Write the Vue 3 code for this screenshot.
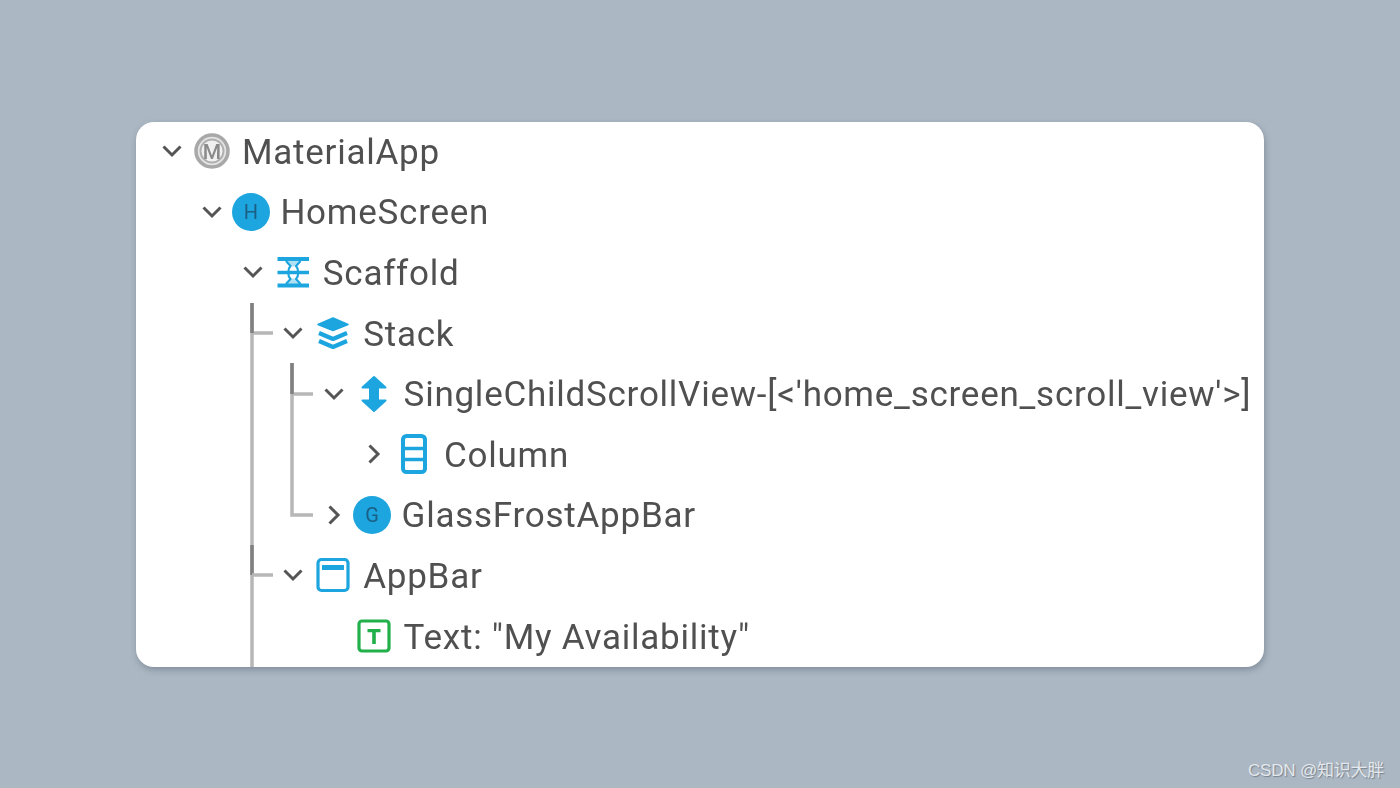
<script setup>
const rows = [
  { label: 'MaterialApp', depth: 0, open: true, icon: 'material' },
  { label: 'HomeScreen', depth: 1, open: true, icon: 'circle', letter: 'H' },
  { label: 'Scaffold', depth: 2, open: true, icon: 'scaffold' },
  { label: 'Stack', depth: 3, open: true, icon: 'stack' },
  { label: "SingleChildScrollView-[<'home_screen_scroll_view'>]", depth: 4, open: true, icon: 'scroll' },
  { label: 'Column', depth: 5, open: false, icon: 'column' },
  { label: 'GlassFrostAppBar', depth: 4, open: false, icon: 'circle', letter: 'G' },
  { label: 'AppBar', depth: 3, open: true, icon: 'appbar' },
  { label: 'Text: "My Availability"', depth: 4, icon: 'text' },
]
</script>

<template>
  <main class="page">
    <section class="card">
      <svg class="guides" width="1128" height="545" viewBox="136 122 1128 545">
        <g fill="none" stroke-width="3.500">
          <path d="M252 303V667M252 333H273" stroke="#b7b7b7" />
          <path d="M292 363V515H313M292 394H313" stroke="#b7b7b7" />
          <path d="M252 303V333M252 545V575M292 363V394" stroke="#808080" />
          <path d="M252 575H273" stroke="#b7b7b7" />
        </g>
      </svg>

      <div class="tree">
        <div v-for="row in rows" :key="row.label" class="row" :class="{ 'row-circle': row.icon === 'circle' }" :style="{ paddingLeft: row.depth * 40.4 + 'px' }">
          <span class="chevron">
            <svg v-if="row.open !== undefined" width="24" height="24" viewBox="0 0 24 24">
              <path :d="row.open ? 'M3.500 7.500l8.500 8.500 8.500-8.500' : 'M7.500 3.500l8.500 8.500-8.500 8.500'" fill="none" stroke="#555" stroke-width="3" />
            </svg>
          </span>

          <span class="icon">
            <svg v-if="row.icon === 'material'" width="40" height="40" viewBox="0 0 40 40">
              <circle cx="20" cy="20" r="16" fill="#e4e4e4" stroke="#a8a8a8" stroke-width="3.500" />
              <circle cx="20" cy="20" r="11.500" fill="#f0f0f0" stroke="#b0b0b0" stroke-width="2" />
              <text x="20" y="27.500" text-anchor="middle" class="icon-letter material-letter">M</text>
            </svg>

            <svg v-else-if="row.icon === 'circle'" width="40" height="40" viewBox="0 0 40 40">
              <circle cx="20" cy="20" r="19" fill="#1ca5de" />
              <text x="20" y="27" text-anchor="middle" class="icon-letter">{{ row.letter }}</text>
            </svg>

            <svg v-else-if="row.icon === 'scaffold'" width="40" height="40" viewBox="0 0 40 40" fill="none" stroke="#1ca5de">
              <path d="M4.500 7H36M4.500 33.500H36" stroke-width="4" />
              <path d="M4.500 20.500H36" stroke-width="3.500" />
              <path d="M13 9L17.500 14C14.500 17 14.500 24 17.500 27L13 32M27.500 9L23 14C26 17 26 24 23 27L27.500 32" stroke-width="2.200" />
              <path d="M14 9H26.500L20 15ZM14 32H26.500L20 26Z" fill="#1ca5de" stroke="none" opacity="0.350" />
            </svg>

            <svg v-else-if="row.icon === 'stack'" width="40" height="40" viewBox="0 0 40 40" fill="none" stroke="#1ca5de" stroke-linejoin="round">
              <path d="M20 5L35 11.500 20 17.500 5 11.500Z" fill="#1ca5de" stroke-width="1.500" />
              <path d="M6 20L20 26 34 20" stroke-width="4.200" />
              <path d="M6 28L20 34 34 28" stroke-width="4.200" />
            </svg>

            <svg v-else-if="row.icon === 'scroll'" width="40" height="40" viewBox="0 0 40 40" fill="#1ca5de" stroke="#1ca5de" stroke-width="2" stroke-linejoin="round">
              <path d="M20 3L31.500 13.500H24V26.500H31.500L20 37 8.500 26.500H16V13.500H8.500Z" />
            </svg>

            <svg v-else-if="row.icon === 'column'" width="40" height="40" viewBox="0 0 40 40" fill="none" stroke="#1ca5de">
              <rect x="9" y="2" width="22" height="36" rx="3.500" stroke-width="4" />
              <path d="M9 14.500H31M9 25.500H31" stroke-width="3.500" />
            </svg>

            <svg v-else-if="row.icon === 'appbar'" width="40" height="40" viewBox="0 0 40 40" fill="none" stroke="#1ca5de">
              <rect x="5" y="4.500" width="30" height="31" rx="3.500" stroke-width="3.200" />
              <path d="M9 12.500H31" stroke-width="5" />
            </svg>

            <svg v-else width="40" height="40" viewBox="0 0 40 40" fill="none">
              <rect x="5" y="5" width="30" height="30" rx="3" stroke="#22b04a" stroke-width="3.200" />
              <path d="M13.500 13H26.500V16.200H21.800V28H18.200V16.200H13.500Z" fill="#22b04a" />
            </svg>
          </span>

          <span class="label">{{ row.label }}</span>
        </div>
      </div>
    </section>

    <span class="watermark">CSDN @知识大胖</span>
  </main>
</template>

<style>
body {
  background: #abb7c3;
}
</style>

<style scoped>
.page {
  height: 788px;
  box-sizing: border-box;
  padding: 122px 136px 0;
  position: relative;
  overflow: hidden;
}

.card {
  position: relative;
  height: 545px;
  background: #fff;
  border-radius: 18px;
  box-shadow: 1px 3px 6px rgba(60, 70, 85, 0.35);
  overflow: hidden;
}

.guides {
  position: absolute;
  left: 0;
  top: 0;
  filter: blur(0.5px);
}

.tree {
  position: relative;
  margin-top: -1px;
  padding-left: 24px;
  filter: blur(0.6px);
}

.row {
  display: flex;
  align-items: center;
  height: 60.6px;
  white-space: nowrap;
  font-family: Roboto, "Liberation Sans", sans-serif;
  font-size: 35px;
  letter-spacing: 0.75px;
  color: #505050;
}

.chevron {
  width: 24px;
  height: 24px;
  flex: none;
}

.chevron svg,
.icon svg {
  display: block;
}

.icon {
  width: 40px;
  height: 40px;
  margin-left: 8px;
  flex: none;
}

.label {
  margin-left: 10px;
  margin-top: 2px;
}

.row-circle .icon {
  margin-left: 6.500px;
}

.row-circle .label {
  margin-left: 9.500px;
}

.icon-letter {
  font-family: Roboto, "Liberation Sans", sans-serif;
  font-size: 20px;
  letter-spacing: 0;
  fill: #1b5f85;
}

.material-letter {
  fill: #8a8a8a;
  font-size: 21px;
  font-weight: 500;
}

.watermark {
  position: absolute;
  left: 1248px;
  top: 756px;
  font-family: "Liberation Sans", "Noto Sans CJK SC", sans-serif;
  font-size: 17px;
  letter-spacing: -0.2px;
  color: #e4e8ec;
  text-shadow: 1px 1px 1px rgba(70, 80, 90, 0.5);
}
</style>
